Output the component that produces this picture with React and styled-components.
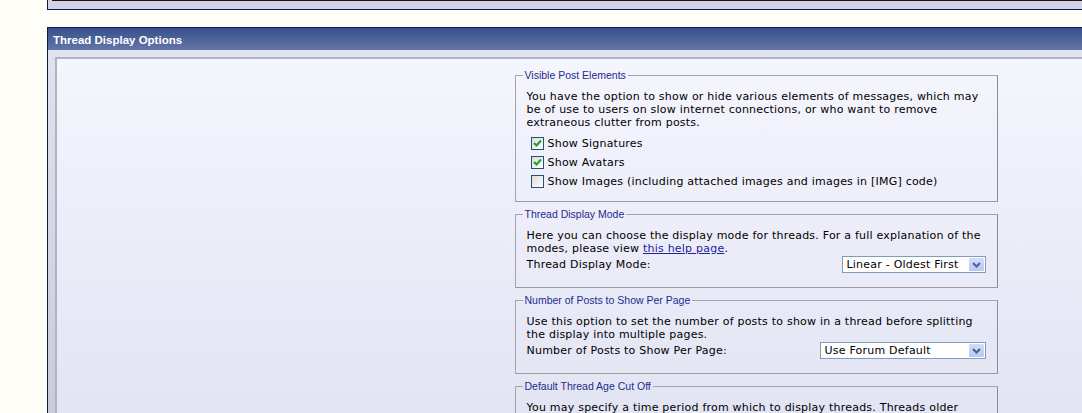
import React from 'react';
import styled, { createGlobalStyle } from 'styled-components';

const GlobalStyle = createGlobalStyle`
  html, body {
    margin: 0;
    padding: 0;
    background: #fefdf7;
    overflow: hidden;
  }
  body {
    font-family: "DejaVu Sans", Verdana, sans-serif;
  }
`;

const Page = styled.div`
  padding-left: 47px;
  width: 1460px;
`;

const PrevPanelTail = styled.div`
  border-left: 1px solid #0b1a4f;
  border-bottom: 1px solid #0b1a4f;
  background: #d2d4e6;
  padding-left: 4px;
  height: 10px;
  box-sizing: border-box;
  margin-bottom: 17px;
`;

const PrevPanelInner = styled.div`
  height: 1px;
  background: #161616;
`;

const Panel = styled.div`
  border: 1px solid #0b1a4f;
  border-right: none;
`;

const PanelHeader = styled.div`
  height: 22px;
  box-sizing: border-box;
  background: linear-gradient(#36508c, #6576a6);
  color: #fff;
  font-family: "Liberation Sans", Arial, sans-serif;
  font-weight: bold;
  font-size: 11.5px;
  line-height: 20px;
  padding: 2px 0 0 5px;
`;

const PanelBody = styled.div`
  background: linear-gradient(#dfe2ef, #cacbd8);
  padding: 7px 0 0 7px;
`;

const InnerBox = styled.div`
  border-top: 2px solid #b2b2c2;
  border-left: 2px solid #b2b2c2;
  background: linear-gradient(#f5f5fd, #e2e4f3);
  width: 1400px;
  height: 360px;
  display: flex;
  flex-direction: column;
  align-items: center;
  padding-top: 10px;
  box-sizing: border-box;
`;

const Fieldset = styled.fieldset`
  width: 483px;
  box-sizing: border-box;
  margin: 0 0 6px 0;
  padding: 9px 11px 14px 11px;
  border: 1px solid #a3a3ad;
  border-right-color: #8a8a92;
  border-bottom-color: #9a9aa2;
`;

const Legend = styled.legend`
  font-family: "Liberation Sans", Arial, sans-serif;
  font-size: 10.5px;
  color: #1f2a8e;
  padding: 0 2px;
  margin-left: -4px;
`;

const Text = styled.div`
  font-size: 11px;
  letter-spacing: 0.22px;
  line-height: 13px;
  color: #000;
`;

const Link = styled.a`
  color: #22229c;
  text-decoration: underline;
`;

const CheckList = styled.div`
  margin-top: 5px;
  margin-bottom: -4px;
`;

const CheckRow = styled.label`
  display: flex;
  align-items: center;
  height: 19px;
  padding-left: 4px;
  font-size: 11px;
  letter-spacing: 0.22px;
  color: #000;
  gap: 4px;
`;

const Box = styled.span`
  width: 11px;
  height: 11px;
  border: 1px solid #1c5180;
  background: linear-gradient(135deg, #dcdcd7, #ffffff);
  display: inline-flex;
  align-items: center;
  justify-content: center;
`;

const SettingRow = styled.div`
  display: flex;
  justify-content: space-between;
  align-items: center;
  font-size: 11px;
  letter-spacing: 0.22px;
  margin-top: 1px;
`;

const Select = styled.div`
  width: ${p => p.w}px;
  height: 17px;
  box-sizing: border-box;
  border: 1px solid #7f9db9;
  background: #fff;
  display: flex;
  align-items: center;
  justify-content: space-between;
  padding: 1px 1px 1px 4px;
  font-size: 11px;
  letter-spacing: 0.22px;
`;

const Arrow = styled.span`
  width: 15px;
  height: 13px;
  background: linear-gradient(#d3ddfb, #b7c8f4);
  border-radius: 1px;
  display: inline-flex;
  align-items: center;
  justify-content: center;
`;

const Check = () => (
  <svg width="9" height="9" viewBox="0 0 9 9">
    <path d="M1 4 L3.5 6.5 L8 1.5" stroke="#21a121" strokeWidth="2" fill="none" />
  </svg>
);

const Chevron = () => (
  <svg width="9" height="6" viewBox="0 0 9 6">
    <path d="M1 1 L4.5 4.5 L8 1" stroke="#4d6185" strokeWidth="2" fill="none" />
  </svg>
);

const Checkbox = ({ checked, children }) => (
  <CheckRow>
    <Box>{checked && <Check />}</Box>
    {children}
  </CheckRow>
);

const Dropdown = ({ w, value }) => (
  <Select w={w}>
    <span>{value}</span>
    <Arrow><Chevron /></Arrow>
  </Select>
);

export default function App() {
  return (
    <Page>
      <GlobalStyle />
      <PrevPanelTail><PrevPanelInner /></PrevPanelTail>
      <Panel>
        <PanelHeader>Thread Display Options</PanelHeader>
        <PanelBody>
          <InnerBox>
            <Fieldset>
              <Legend>Visible Post Elements</Legend>
              <Text>
                You have the option to show or hide various elements of messages, which may
                be of use to users on slow internet connections, or who want to remove
                extraneous clutter from posts.
              </Text>
              <CheckList>
                <Checkbox checked>Show Signatures</Checkbox>
                <Checkbox checked>Show Avatars</Checkbox>
                <Checkbox>Show Images (including attached images and images in [IMG] code)</Checkbox>
              </CheckList>
            </Fieldset>
            <Fieldset>
              <Legend>Thread Display Mode</Legend>
              <Text>
                Here you can choose the display mode for threads. For a full explanation of the
                modes, please view <Link href="#">this help page</Link>.
              </Text>
              <SettingRow>
                <span>Thread Display Mode:</span>
                <Dropdown w={144} value="Linear - Oldest First" />
              </SettingRow>
            </Fieldset>
            <Fieldset>
              <Legend>Number of Posts to Show Per Page</Legend>
              <Text>
                Use this option to set the number of posts to show in a thread before splitting
                the display into multiple pages.
              </Text>
              <SettingRow>
                <span>Number of Posts to Show Per Page:</span>
                <Dropdown w={166} value="Use Forum Default" />
              </SettingRow>
            </Fieldset>
            <Fieldset>
              <Legend>Default Thread Age Cut Off</Legend>
              <Text>
                You may specify a time period from which to display threads. Threads older
                than this time period will not be shown.
              </Text>
            </Fieldset>
          </InnerBox>
        </PanelBody>
      </Panel>
    </Page>
  );
}
